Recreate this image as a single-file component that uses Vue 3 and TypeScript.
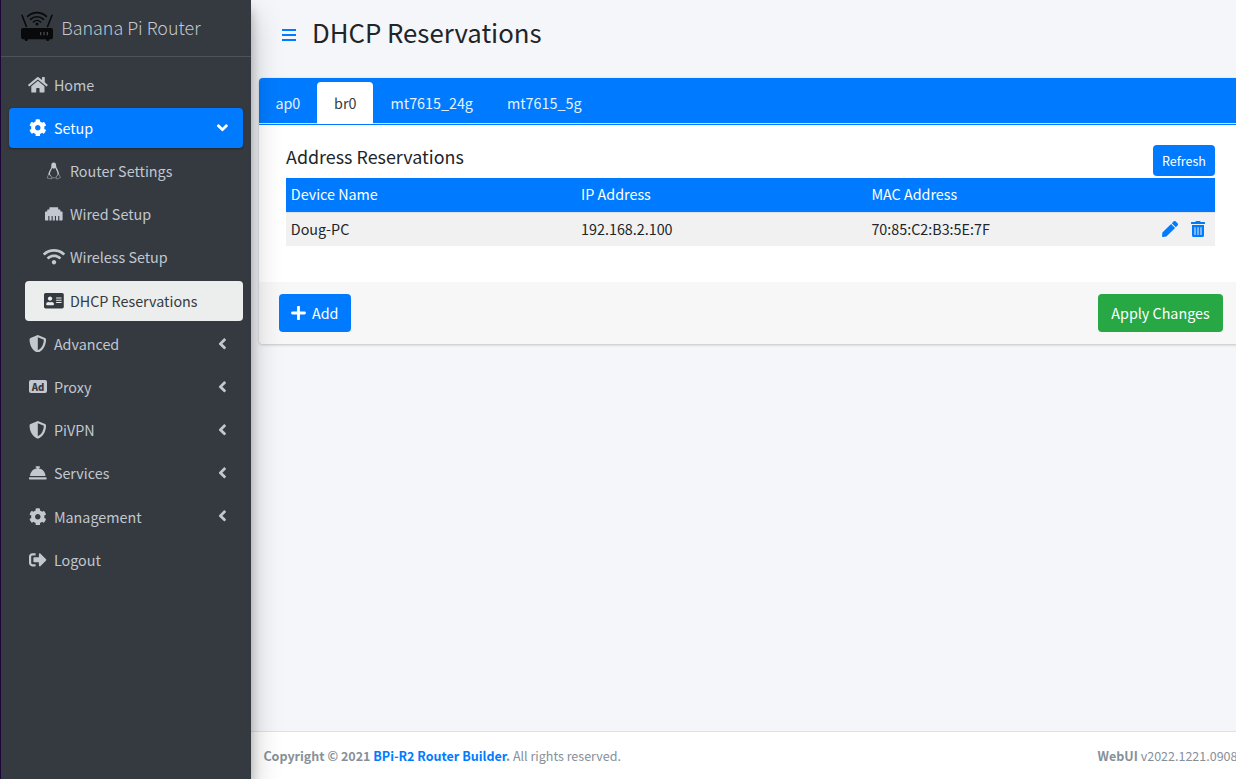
<script setup lang="ts">
import { ref } from 'vue'

interface NavItem {
  label: string
  icon: string
  state?: 'open' | 'current'
  child?: boolean
  arrow?: boolean
}

interface Glyph {
  w: number
  width: number
  d: string
}

const glyphs: Record<string, Glyph> = {
  home: { w: 576, width: 19.8, d: 'M280.37 148.26L96 300.11V464a16 16 0 0 0 16 16l112.06-.29a16 16 0 0 0 15.92-16V368a16 16 0 0 1 16-16h64a16 16 0 0 1 16 16v95.64a16 16 0 0 0 16 16.05L464 480a16 16 0 0 0 16-16V300L295.67 148.26a12.19 12.19 0 0 0-15.3 0zM571.6 251.47L488 182.56V44.05a12 12 0 0 0-12-12h-56a12 12 0 0 0-12 12v72.61L318.47 43a48 48 0 0 0-61 0L4.34 251.47a12 12 0 0 0-1.6 16.9l25.5 31A12 12 0 0 0 45.15 301l235.22-193.74a12.19 12.19 0 0 1 15.3 0L530.9 301a12 12 0 0 0 16.9-1.6l25.5-31a12 12 0 0 0-1.7-16.93z' },
  cog: { w: 512, width: 17.6, d: 'M487.4 315.7l-42.6-24.6c4.3-23.2 4.3-47 0-70.2l42.6-24.6c4.9-2.8 7.1-8.6 5.5-14-11.1-35.6-30-67.8-54.7-94.6-3.8-4.1-10-5.1-14.8-2.3L380.8 110c-17.9-15.4-38.5-27.3-60.8-35.1V25.8c0-5.6-3.9-10.5-9.4-11.7-36.7-8.2-74.3-7.8-109.2 0-5.5 1.2-9.4 6.1-9.4 11.7V75c-22.2 7.9-42.8 19.8-60.8 35.1L88.7 85.5c-4.9-2.8-11-1.9-14.8 2.3-24.7 26.7-43.6 58.9-54.7 94.6-1.7 5.4.6 11.2 5.5 14L67.3 221c-4.3 23.2-4.3 47 0 70.2l-42.6 24.6c-4.9 2.8-7.1 8.6-5.5 14 11.1 35.6 30 67.8 54.7 94.6 3.8 4.1 10 5.1 14.8 2.3l42.6-24.6c17.9 15.4 38.5 27.3 60.8 35.1v49.2c0 5.6 3.9 10.5 9.4 11.7 36.7 8.2 74.3 7.8 109.2 0 5.5-1.2 9.4-6.1 9.4-11.7v-49.2c22.2-7.9 42.8-19.8 60.8-35.1l42.6 24.6c4.9 2.8 11 1.9 14.8-2.3 24.7-26.7 43.6-58.9 54.7-94.6 1.5-5.5-.7-11.3-5.6-14.1zM256 336c-44.1 0-80-35.9-80-80s35.9-80 80-80 80 35.9 80 80-35.9 80-80 80z' },
  ethernet: { w: 512, width: 17.6, d: 'M496 192h-48v-48c0-8.8-7.2-16-16-16h-48V80c0-8.8-7.2-16-16-16H144c-8.8 0-16 7.2-16 16v48H80c-8.8 0-16 7.2-16 16v48H16c-8.8 0-16 7.2-16 16v224c0 8.8 7.2 16 16 16h80V320h32v128h64V320h32v128h64V320h32v128h64V320h32v128h80c8.8 0 16-7.2 16-16V208c0-8.8-7.2-16-16-16z' },
  wifi: { w: 640, width: 22, d: 'M634.91 154.88C457.74-8.99 182.19-8.93 5.09 154.88c-6.66 6.16-6.79 16.59-.35 22.98l34.24 33.97c6.14 6.1 16.02 6.23 22.4.38 145.92-133.68 371.3-133.71 517.25 0 6.38 5.85 16.26 5.71 22.4-.38l34.24-33.97c6.43-6.39 6.3-16.82-.36-22.98zM320 352c-35.35 0-64 28.65-64 64s28.65 64 64 64 64-28.65 64-64-28.65-64-64-64zm202.67-83.59c-115.26-101.93-290.21-101.82-405.34 0-6.9 6.1-7.12 16.69-.57 23.15l34.44 33.99c6 5.92 15.66 6.32 22.05.8 83.95-72.57 209.74-72.41 293.49 0 6.39 5.52 16.05 5.13 22.05-.8l34.44-33.99c6.56-6.46 6.33-17.06-.56-23.15z' },
  card: { w: 576, width: 19.8, d: 'M528 32H48C21.5 32 0 53.5 0 80v352c0 26.5 21.5 48 48 48h480c26.5 0 48-21.5 48-48V80c0-26.5-21.5-48-48-48zm-352 96c35.3 0 64 28.7 64 64s-28.7 64-64 64-64-28.7-64-64 28.7-64 64-64zm112 236.8c0 10.6-10 19.2-22.4 19.2H86.4C74 384 64 375.4 64 364.8v-19.2c0-31.8 30.1-57.6 67.2-57.6h5c12.3 5.1 25.7 8 39.8 8s27.6-2.9 39.8-8h5c37.1 0 67.2 25.8 67.2 57.6v19.2zM512 312c0 4.4-3.6 8-8 8H360c-4.4 0-8-3.6-8-8v-16c0-4.4 3.6-8 8-8h144c4.4 0 8 3.6 8 8v16zm0-64c0 4.4-3.6 8-8 8H360c-4.4 0-8-3.6-8-8v-16c0-4.4 3.6-8 8-8h144c4.4 0 8 3.6 8 8v16zm0-64c0 4.4-3.6 8-8 8H360c-4.4 0-8-3.6-8-8v-16c0-4.4 3.6-8 8-8h144c4.4 0 8 3.6 8 8v16z' },
  shield: { w: 512, width: 17.6, d: 'M466.5 83.7l-192-80a48.15 48.15 0 0 0-36.9 0l-192 80C27.7 91.1 16 108.6 16 128c0 198.5 114.5 335.7 221.5 380.3 11.8 4.9 25.1 4.9 36.9 0C360.1 472.6 496 349.3 496 128c0-19.4-11.7-36.9-29.5-44.3zM256.1 446.3l-.1-381 175.9 73.3c-3.3 151.4-82.1 261.1-175.8 307.7z' },
  bell: { w: 512, width: 17.6, d: 'M288 130.54V112h16c8.84 0 16-7.16 16-16V80c0-8.84-7.16-16-16-16h-96c-8.84 0-16 7.16-16 16v16c0 8.84 7.16 16 16 16h16v18.54C115.49 146.11 32 239.18 32 352h448c0-112.82-83.49-205.89-192-221.46zM496 384H16c-8.84 0-16 7.16-16 16v32c0 8.84 7.16 16 16 16h480c8.84 0 16-7.16 16-16v-32c0-8.84-7.16-16-16-16z' },
  logout: { w: 512, width: 17.6, d: 'M497 273L329 441c-15 15-41 4.5-41-17v-96H152c-13.3 0-24-10.7-24-24v-96c0-13.3 10.7-24 24-24h136V88c0-21.4 25.9-32 41-17l168 168c9.3 9.4 9.3 24.6 0 34zM192 436v-40c0-6.6-5.4-12-12-12H96c-17.7 0-32-14.3-32-32V160c0-17.7 14.3-32 32-32h84c6.6 0 12-5.4 12-12V76c0-6.6-5.4-12-12-12H96c-53 0-96 43-96 96v192c0 53 43 96 96 96h84c6.6 0 12-5.4 12-12z' },
}

const nav: NavItem[] = [
  { label: 'Home', icon: 'home' },
  { label: 'Setup', icon: 'cog', state: 'open', arrow: true },
  { label: 'Router Settings', icon: 'linux', child: true },
  { label: 'Wired Setup', icon: 'ethernet', child: true },
  { label: 'Wireless Setup', icon: 'wifi', child: true },
  { label: 'DHCP Reservations', icon: 'card', child: true, state: 'current' },
  { label: 'Advanced', icon: 'shield', arrow: true },
  { label: 'Proxy', icon: 'ad', arrow: true },
  { label: 'PiVPN', icon: 'shield', arrow: true },
  { label: 'Services', icon: 'bell', arrow: true },
  { label: 'Management', icon: 'cog', arrow: true },
  { label: 'Logout', icon: 'logout' },
]

const tabs = ['ap0', 'br0', 'mt7615_24g', 'mt7615_5g']
const activeTab = ref('br0')

const reservations = [{ name: 'Doug-PC', ip: '192.168.2.100', mac: '70:85:C2:B3:5E:7F' }]
</script>

<template>
  <div class="page">
    <aside class="sidebar">
      <a class="brand">
        <svg class="logo" viewBox="0 0 34 32" width="34" height="32">
          <rect x="1" y="18" width="32" height="11.300" rx="2" fill="#08090b" />
          <path d="M4.500 29h3.500l-.8 2H5.300zM26 29h3.500l-.8 2h-1.900z" fill="#08090b" />
          <g fill="none" stroke="#08090b" stroke-linecap="round" stroke-width="1.600">
            <path d="M2 5.300l4.400 11.200M32 5.300l-4.400 11.200" />
            <path d="M7.600 6.400a13.500 13.500 0 0 1 18.800 0M10.500 9.300a9.400 9.400 0 0 1 13 0M13.400 12a5.200 5.200 0 0 1 7.200 0" />
          </g>
          <circle cx="17" cy="14" r="1.500" fill="#08090b" />
          <path d="M20.700 22v3.200M24 22v3.200M27.300 22v3.200" stroke="#4a5056" stroke-width="1.200" />
        </svg>
        <span class="brand-text">Banana Pi Router</span>
      </a>
      <nav class="menu">
        <a v-for="item in nav" :key="item.label" class="item" :class="[item.state, { child: item.child }]">
          <span class="icon">
            <svg v-if="item.icon === 'linux'" viewBox="0 0 16 18" width="15.400" height="17.600">
              <path d="M5.500 4.500C5.300 2 6 .5 8 .5s2.700 1.600 2.600 3.900c0 2 2.900 4.300 2.900 8.300l-2 2.800H5l-2.500-2.700c0-3.500 3-5.500 3-8.300z" fill="currentColor" />
              <path d="M6.300 6.100L8 6.900l1.800-.9c.6 2 2.300 3.700 2.300 6.900L10.700 15.500H5.600L4.100 12.200c0-2.700 1.900-4 2.200-6.100z" fill="#343a40" />
              <path d="M2.800 12.500l-1.700 4 4.700 1 .5-1.800zM13.200 12.500l1.900 3.500-3.900 1.700-.8-2.500zM6 16.300h4.500" fill="#343a40" stroke="currentColor" stroke-width=".5" />
            </svg>
            <span v-else-if="item.icon === 'ad'" class="ad">Ad</span>
            <svg v-else :viewBox="`0 0 ${glyphs[item.icon].w} 512`" :width="glyphs[item.icon].width" height="17.600">
              <path :d="glyphs[item.icon].d" fill="currentColor" />
            </svg>
          </span>
          <span class="label">{{ item.label }}</span>
          <svg v-if="item.arrow" class="arrow" viewBox="0 0 256 512" width="8.800" height="17.600">
            <path d="M31.700 239l136-136c9.400-9.400 24.600-9.400 33.900 0l22.600 22.600c9.400 9.400 9.400 24.600 0 33.900L127.900 256l96.400 96.400c9.400 9.400 9.400 24.600 0 33.900L201.700 409c-9.400 9.400-24.600 9.400-33.900 0l-136-136c-9.500-9.400-9.500-24.600-.1-34z" fill="currentColor" />
          </svg>
        </a>
      </nav>
    </aside>

    <div class="main">
      <header class="heading">
        <svg class="bars" width="14" height="12" viewBox="0 0 14 12">
          <path d="M0 0h14v2H0zM0 5h14v2H0zM0 10h14v2H0z" fill="#007bff" />
        </svg>
        <h1>DHCP Reservations</h1>
      </header>

      <section class="card">
        <div class="tabs">
          <button v-for="tab in tabs" :key="tab" class="tab" :class="{ active: tab === activeTab }" @click="activeTab = tab">{{ tab }}</button>
        </div>
        <div class="body">
          <div class="title-row">
            <h2>Address Reservations</h2>
            <button class="btn small">Refresh</button>
          </div>
          <div class="row head">
            <span>Device Name</span><span>IP Address</span><span>MAC Address</span><span></span>
          </div>
          <div v-for="r in reservations" :key="r.mac" class="row data">
            <span>{{ r.name }}</span><span>{{ r.ip }}</span><span>{{ r.mac }}</span>
            <span class="actions">
              <svg viewBox="0 0 512 512" width="16" height="16">
                <path d="M290.740 93.240l128.020 128.020-277.990 277.990-114.140 12.600C11.350 513.540-1.560 500.620.14 485.340l12.700-114.220 277.900-277.880zm207.200-19.060l-60.110-60.110c-18.750-18.750-49.160-18.750-67.910 0l-56.550 56.550 128.020 128.020 56.550-56.550c18.750-18.760 18.750-49.160 0-67.910z" fill="#007bff" />
              </svg>
              <svg viewBox="0 0 448 512" width="14" height="16">
                <path d="M32 464a48 48 0 0 0 48 48h288a48 48 0 0 0 48-48V128H32zm272-256a16 16 0 0 1 32 0v224a16 16 0 0 1-32 0zm-96 0a16 16 0 0 1 32 0v224a16 16 0 0 1-32 0zm-96 0a16 16 0 0 1 32 0v224a16 16 0 0 1-32 0zM432 32H312l-9.400-18.700A24 24 0 0 0 281.100 0H166.800a23.720 23.720 0 0 0-21.400 13.300L136 32H16A16 16 0 0 0 0 48v32a16 16 0 0 0 16 16h416a16 16 0 0 0 16-16V48a16 16 0 0 0-16-16z" fill="#007bff" />
              </svg>
            </span>
          </div>
        </div>
        <div class="card-foot">
          <button class="btn add">
            <svg viewBox="0 0 15 14" width="15" height="14"><path d="M7.500 1v12M1.500 7h12" stroke="#fff" stroke-width="2.800" stroke-linecap="round" /></svg>
            <span>Add</span>
          </button>
          <button class="btn apply">Apply Changes</button>
        </div>
      </section>

      <footer class="footer">
        <span><b>Copyright © 2021 <a>BPi-R2 Router Builder</a>.</b> All rights reserved.</span>
        <span class="version"><b>WebUI</b> v2022.1221.0908</span>
      </footer>
    </div>
  </div>
</template>

<style>
body { overflow: hidden; }
</style>

<style scoped>
.page {
  --fs: 14.33px;
  box-sizing: border-box;
  display: flex;
  width: 1236px;
  height: 779px;
  overflow: hidden;
  border-left: 1px solid #1b0638;
  background: #f4f6f9;
  color: #212529;
  font-family: "Noto Sans CJK SC", "Noto Sans", sans-serif;
  font-size: var(--fs);
  line-height: 24px;
}
svg { display: block; flex: none; }
h1, h2 { margin: 0; font-weight: 400; }
button { border: 0; margin: 0; font: inherit; cursor: pointer; }

.sidebar {
  position: relative;
  z-index: 2;
  flex: none;
  width: 250px;
  background: #343a40;
  color: #c2c7d0;
  box-shadow: 0 14px 28px rgba(0, 0, 0, .25), 0 10px 10px rgba(0, 0, 0, .22);
}
.brand {
  box-sizing: border-box;
  display: flex;
  align-items: flex-start;
  height: 57px;
  padding: 10px 0 0 19px;
  border-bottom: 1px solid #4b545c;
}
.brand-text {
  margin: 2px 0 0 7.200px;
  line-height: 30px;
  font-size: 17.900px;
  font-weight: 300;
  white-space: nowrap;
}
.menu {
  display: flex;
  flex-direction: column;
  gap: 3.200px;
  padding: 7.680px 8px 0;
}
.item {
  box-sizing: border-box;
  display: flex;
  align-items: center;
  height: 40px;
  padding: 0 16px;
  border-radius: 4px;
}
.item.child { margin-left: 16px; }
.item.open {
  background: #007bff;
  color: #fff;
  box-shadow: 0 1px 3px rgba(0, 0, 0, .12), 0 1px 2px rgba(0, 0, 0, .24);
}
.item.current { background: #ebeeec; color: #343a40; }
.icon {
  display: flex;
  justify-content: center;
  width: 25.800px;
  margin: 0 3.100px .5px 0;
}
.label { flex: 1; white-space: nowrap; }
.arrow { margin: 0 0 1px; }
.open .arrow { transform: rotate(-90deg); }
.ad {
  width: 18px;
  height: 13px;
  border-radius: 2px;
  background: #c2c7d0;
  color: #343a40;
  font: 900 9.500px/14px "Noto Sans CJK SC", sans-serif;
  text-align: center;
}

.main {
  display: flex;
  flex: none;
  flex-direction: column;
  width: 992px;
}
.heading {
  display: flex;
  align-items: center;
  height: 64px;
  padding-left: 31px;
}
.bars { margin-top: 6px; }
.heading h1 { margin: 0 0 0 16px; font-size: 25.780px; line-height: 34px; }
.card {
  margin: 14px 0 0 8px;
  border-radius: 4px;
  background: #fff;
  box-shadow: 0 0 1px rgba(0, 0, 0, .125), 0 1px 3px rgba(0, 0, 0, .2);
}
.tabs {
  box-sizing: border-box;
  display: flex;
  height: 46px;
  padding-top: 4px;
  border-radius: 4px 4px 0 0;
  background: linear-gradient(#007bff 45px, #dee2e6 45px);
}
.tab {
  height: 42px;
  padding: 0 17px;
  border-radius: 4px 4px 0 0;
  background: none;
  color: #e6f2ff;
}
.tab:first-child { padding: 0 16.800px 0 16.400px; }
.tab.active { background: #fff; color: #343a40; }
.body { padding: 20px 28px 36px 27px; border-top: 1px solid #007bff; height: 101px; }
.title-row { display: flex; justify-content: space-between; height: 33px; }
h2 { margin-top: -1px; font-size: 17.900px; line-height: 24px; }
.btn {
  border-radius: 4px;
  background: #007bff;
  color: #fff;
}
.small { width: 62px; height: 31px; padding: 0; font-size: 12.530px; line-height: 21px; }
.row {
  box-sizing: border-box;
  display: grid;
  grid-template-columns: 290.300px 290.300px 1fr 60px;
  align-items: center;
  height: 34px;
  padding: 0 0 2px 4.800px;
}
.head { background: #007bff; color: #fff; }
.data { border-top: 1px solid #dee2e6; background: #f1f1f1; }
.actions { display: flex; gap: 13px; padding-left: 7px; }
.card-foot {
  display: flex;
  justify-content: space-between;
  box-sizing: border-box;
  height: 62px;
  padding: 12px 20px;
  border-radius: 0 0 4px 4px;
  background: #f7f7f7;
}
.card-foot .btn { height: 38px; }
.add { display: flex; align-items: center; gap: 6px; width: 72px; padding: 0 12px; }
.apply { width: 125px; padding: 0; background: #28a745; }
.footer {
  box-sizing: border-box;
  display: flex;
  justify-content: space-between;
  height: 48px;
  margin-top: auto;
  padding: 12px 0 0 12.400px;
  border-top: 1px solid #dee2e6;
  background: #fff;
  color: #869099;
  font-size: 12.530px;
  white-space: nowrap;
}
.footer a { color: #007bff; }
.footer b { font-weight: 700; }
.version { margin-right: 5.500px; }
</style>
